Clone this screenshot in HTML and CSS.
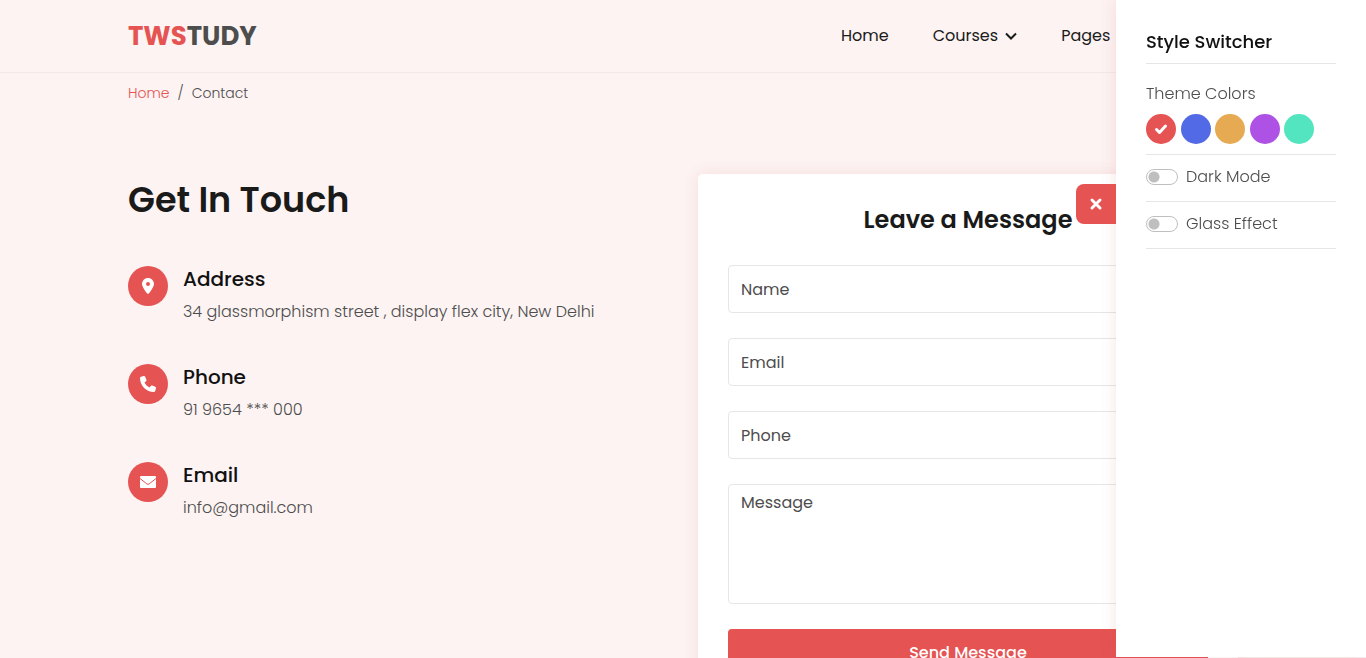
FILE: index.html
```html
<!DOCTYPE html>
<html lang="en">
<head>
<meta charset="utf-8">
<meta name="viewport" content="width=device-width, initial-scale=1">
<title>Contact - TWSTUDY</title>
<link rel="stylesheet" href="styles.css">
</head>
<body>
<header class="header">
  <div class="container header-row">
    <a class="logo" href="#"><span class="logo-accent">TWS</span>TUDY</a>
    <nav class="menu">
      <a class="menu-link" href="#">Home</a>
      <a class="menu-link" href="#">Courses
        <svg class="chevron" viewBox="0 0 12 8" aria-hidden="true"><path d="M1 1.500 6 6.500l5-5"/></svg>
      </a>
      <a class="menu-link" href="#">Pages</a>
    </nav>
  </div>
</header>

<nav class="container breadcrumb">
  <a class="breadcrumb-link" href="#">Home</a>
  <span>/</span>
  <span>Contact</span>
</nav>

<main class="container contact">
  <section class="info">
    <h1 class="info-title">Get In Touch</h1>
    <div class="info-item">
      <span class="info-icon"><svg class="icon" viewBox="0 0 384 512" aria-hidden="true"><path d="M215.7 499.2C267 435 384 279.4 384 192C384 86 298 0 192 0S0 86 0 192c0 87.400 117 243 168.300 307.200c12.300 15.300 35.100 15.300 47.400 0zM192 128a64 64 0 1 1 0 128 64 64 0 1 1 0-128z"/></svg></span>
      <div><h2 class="info-name">Address</h2><p class="info-text">34 glassmorphism street , display flex city, New Delhi</p></div>
    </div>
    <div class="info-item">
      <span class="info-icon"><svg class="icon" viewBox="0 0 512 512" aria-hidden="true"><path d="M164.900 24.600c-7.700-18.600-28-28.500-47.400-23.200l-88 24C12.100 30.200 0 46 0 64C0 311.400 200.600 512 448 512c18 0 33.800-12.100 38.600-29.500l24-88c5.300-19.400-4.600-39.700-23.200-47.400l-96-40c-16.300-6.800-35.200-2.100-46.300 11.600L304.700 368C234.300 334.700 177.300 277.700 144 207.300L193.300 167c13.700-11.200 18.400-30 11.600-46.300l-40-96z"/></svg></span>
      <div><h2 class="info-name">Phone</h2><p class="info-text">91 9654 *** 000</p></div>
    </div>
    <div class="info-item">
      <span class="info-icon"><svg class="icon" viewBox="0 0 16 16" aria-hidden="true"><rect y="2" width="16" height="12" rx="1"/><path class="flap" d="M0 4.500 6.800 9.900Q8 10.800 9.200 9.900L16 4.500"/></svg></span>
      <div><h2 class="info-name">Email</h2><p class="info-text">info@gmail.com</p></div>
    </div>
  </section>

  <form class="card">
    <h2 class="card-title">Leave a Message</h2>
    <input class="field" type="text" placeholder="Name" aria-label="Name">
    <input class="field" type="email" placeholder="Email" aria-label="Email">
    <input class="field" type="tel" placeholder="Phone" aria-label="Phone">
    <textarea class="field field-message" placeholder="Message" aria-label="Message"></textarea>
    <button class="send" type="button">Send Message</button>
  </form>
</main>

<aside class="switcher">
  <button class="switcher-toggle" type="button" aria-label="Close">
    <svg class="cross" viewBox="0 0 14 14" aria-hidden="true"><path d="m3 3 8 8M11 3l-8 8"/></svg>
  </button>
  <h2 class="switcher-title">Style Switcher</h2>
  <section class="switcher-colors">
    <h3 class="switcher-label">Theme Colors</h3>
    <div class="swatches">
      <button class="swatch swatch-red" type="button" aria-label="Red"><svg class="check" viewBox="0 0 14 14" aria-hidden="true"><path d="m2.500 7.500 3 3 6-6.500"/></svg></button>
      <button class="swatch swatch-blue" type="button" aria-label="Blue"></button>
      <button class="swatch swatch-orange" type="button" aria-label="Orange"></button>
      <button class="swatch swatch-purple" type="button" aria-label="Purple"></button>
      <button class="swatch swatch-green" type="button" aria-label="Green"></button>
    </div>
  </section>
  <label class="switch-row"><input class="switch" type="checkbox">Dark Mode</label>
  <label class="switch-row"><input class="switch" type="checkbox">Glass Effect</label>
</aside>
</body>
</html>
```
FILE: styles.css
```css
:root {
  --main: #e55353;
  --ink: #1a1a1a;
  --text: #4d4d4d;
  --line: #e6e6e6;
}

* { box-sizing: border-box; margin: 0; padding: 0; }

html { scrollbar-width: none; }

body {
  background: #fcf3f2;
  color: var(--text);
  font-family: Poppins, Inter, "Open Sans", sans-serif;
  font-size: 16px;
  font-weight: 300;
  line-height: 24px;
}

a { color: inherit; text-decoration: none; }
button { border: 0; font: inherit; cursor: pointer; }
svg { display: block; }

.container { max-width: 1140px; margin: 0 auto; padding: 0 15px; }

.header { border-bottom: 1px solid #f3e8e7; }
.header-row { display: flex; align-items: center; justify-content: space-between; height: 72px; }
.logo { font-size: 26px; font-weight: 700; line-height: 36px; }
.logo-accent { color: var(--main); }
.menu { display: flex; gap: 44px; width: 397px; color: var(--ink); font-weight: 400; }
.menu-link { display: flex; align-items: center; gap: 7px; }
.chevron { width: 12px; height: 8px; fill: none; stroke: currentColor; stroke-width: 2; }

.breadcrumb { display: flex; gap: 8px; padding-top: 8px; font-size: 14px; }
.breadcrumb-link { color: var(--main); }

.contact { display: grid; grid-template-columns: 1fr 1fr; gap: 30px; padding-top: 69px; }
.info-title { margin-bottom: 40px; color: var(--ink); font-size: 35px; font-weight: 600; line-height: 52px; }
.info-item { display: flex; gap: 15px; margin-bottom: 40px; }
.info-icon {
  display: grid;
  place-items: center;
  flex: none;
  width: 40px;
  height: 40px;
  border-radius: 50%;
  background: var(--main);
}
.icon { width: 16px; height: 16px; fill: #fff; }
.flap { fill: none; stroke: var(--main); stroke-width: 1; }
.info-name { margin-bottom: 8px; color: #111; font-size: 20px; font-weight: 500; line-height: 26px; }

.card {
  display: grid;
  gap: 25px;
  padding: 30px 30px 40px;
  border-radius: 5px;
  background: #fff;
  box-shadow: 0 0 15px rgba(200, 80, 80, 0.12);
}
.card-title { margin-bottom: 5px; color: var(--ink); font-size: 24px; font-weight: 600; line-height: 31px; text-align: center; }
.field {
  width: 100%;
  height: 48px;
  padding: 6px 12px;
  border: 1px solid var(--line);
  border-radius: 4px;
  background: #fff;
  color: var(--text);
  font: inherit;
  font-weight: 400;
}
.field::placeholder { color: var(--text); opacity: 1; }
.field-message { display: block; height: 120px; resize: none; }
.send { height: 48px; border-radius: 4px; background: var(--main); color: #fff; font-weight: 500; }

.switcher {
  position: fixed;
  top: 0;
  right: 0;
  bottom: 1px;
  width: 250px;
  padding: 30px;
  background: #fff;
  box-shadow: 0 0 15px rgba(200, 80, 80, 0.15);
}
.switcher-toggle {
  position: absolute;
  top: 184px;
  right: 100%;
  display: grid;
  place-items: center;
  width: 40px;
  height: 40px;
  border-radius: 8px 0 0 8px;
  background: var(--main);
}
.cross { width: 14px; height: 14px; fill: none; stroke: #fff; stroke-width: 3; stroke-linecap: round; }
.switcher-title {
  padding-bottom: 9px;
  border-bottom: 1px solid var(--line);
  color: #111;
  font-size: 18px;
  font-weight: 500;
  line-height: 24px;
}
.switcher-colors { padding: 18px 0 10px; border-bottom: 1px solid var(--line); }
.switcher-label { margin-bottom: 8px; font-size: 16px; font-weight: 300; }
.swatches { display: flex; justify-content: space-between; max-width: 168px; }
.swatch { display: grid; place-items: center; width: 30px; height: 30px; border-radius: 50%; }
.swatch-red { background: var(--main); }
.swatch-blue { background: #526ae5; }
.swatch-orange { background: #e5aa52; }
.swatch-purple { background: #ae52e5; }
.swatch-green { background: #52e5bf; }
.check { width: 14px; height: 14px; fill: none; stroke: #fff; stroke-width: 3; stroke-linecap: round; stroke-linejoin: round; }
.switch-row {
  display: flex;
  align-items: center;
  gap: 8px;
  padding: 10px 0 12px;
  border-bottom: 1px solid var(--line);
}
.switch {
  appearance: none;
  width: 32px;
  height: 16px;
  border: 1px solid #bfbfbf;
  border-radius: 8px;
  background: radial-gradient(circle at 7px 7px, #bfbfbf 5px, transparent 6px);
}
```
